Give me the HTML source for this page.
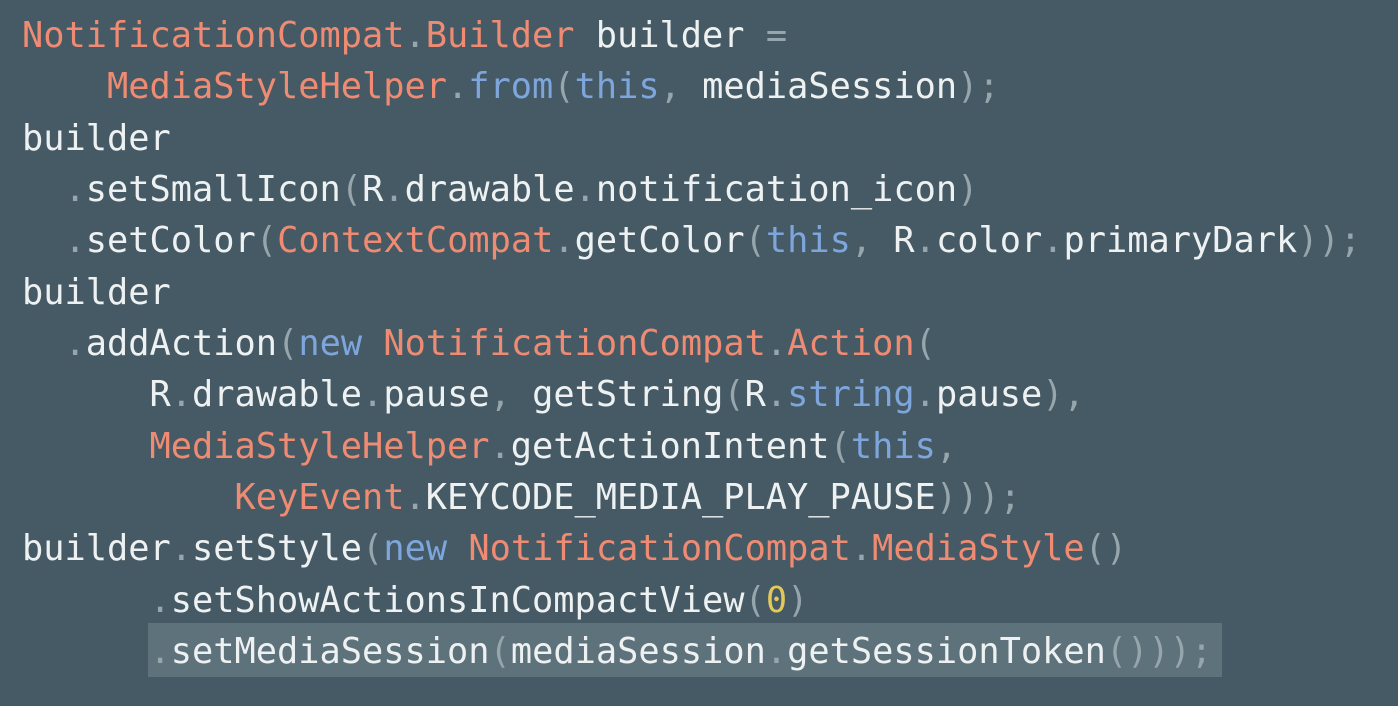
<!DOCTYPE html>
<html><head><meta charset="utf-8"><style>
html,body{margin:0;padding:0}
body{width:1398px;height:706px;background:#455a64;overflow:hidden;position:relative}
.hl{position:absolute;left:148px;top:623px;width:1074px;height:54px;background:#5e727b}
pre{position:absolute;left:22px;top:10px;margin:0;font-family:"DejaVu Sans Mono","Liberation Mono",monospace;font-size:35.3px;line-height:51.35px;color:#eef1f2;white-space:pre}
.o{color:#ef8b72}.b{color:#7ea6dc}.p{color:#97a6ad}.y{color:#e3c85a}
</style></head><body>
<div class="hl"></div>
<pre><span class="o">NotificationCompat</span><span class="p">.</span><span class="o">Builder</span> builder <span class="p">=</span>
    <span class="o">MediaStyleHelper</span><span class="p">.</span><span class="b">from</span><span class="p">(</span><span class="b">this</span><span class="p">,</span> mediaSession<span class="p">);</span>
builder
  <span class="p">.</span>setSmallIcon<span class="p">(</span>R<span class="p">.</span>drawable<span class="p">.</span>notification_icon<span class="p">)</span>
  <span class="p">.</span>setColor<span class="p">(</span><span class="o">ContextCompat</span><span class="p">.</span>getColor<span class="p">(</span><span class="b">this</span><span class="p">,</span> R<span class="p">.</span>color<span class="p">.</span>primaryDark<span class="p">));</span>
builder
  <span class="p">.</span>addAction<span class="p">(</span><span class="b">new</span> <span class="o">NotificationCompat</span><span class="p">.</span><span class="o">Action</span><span class="p">(</span>
      R<span class="p">.</span>drawable<span class="p">.</span>pause<span class="p">,</span> getString<span class="p">(</span>R<span class="p">.</span><span class="b">string</span><span class="p">.</span>pause<span class="p">),</span>
      <span class="o">MediaStyleHelper</span><span class="p">.</span>getActionIntent<span class="p">(</span><span class="b">this</span><span class="p">,</span>
          <span class="o">KeyEvent</span><span class="p">.</span>KEYCODE_MEDIA_PLAY_PAUSE<span class="p">)));</span>
builder<span class="p">.</span>setStyle<span class="p">(</span><span class="b">new</span> <span class="o">NotificationCompat</span><span class="p">.</span><span class="o">MediaStyle</span><span class="p">()</span>
      <span class="p">.</span>setShowActionsInCompactView<span class="p">(</span><span class="y">0</span><span class="p">)</span>
      <span class="p">.</span>setMediaSession<span class="p">(</span>mediaSession<span class="p">.</span>getSessionToken<span class="p">()));</span></pre>
</body></html>
